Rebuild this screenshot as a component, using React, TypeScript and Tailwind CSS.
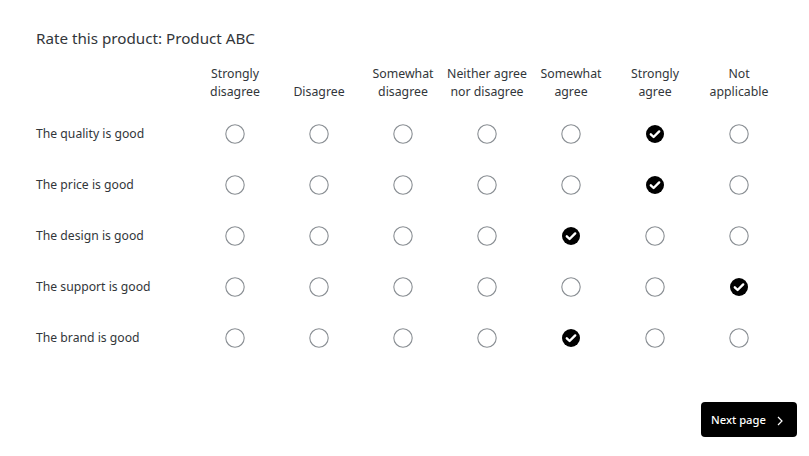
import React from "react";

const cols = [
  ["Strongly", "disagree"],
  ["Disagree"],
  ["Somewhat", "disagree"],
  ["Neither agree", "nor disagree"],
  ["Somewhat", "agree"],
  ["Strongly", "agree"],
  ["Not", "applicable"],
];

const rows: [string, number][] = [
  ["The quality is good", 5],
  ["The price is good", 5],
  ["The design is good", 4],
  ["The support is good", 6],
  ["The brand is good", 4],
];

function Radio({ checked }: { checked: boolean }) {
  if (checked)
    return (
      <svg width="20" height="20" viewBox="0 0 20 20">
        <circle cx="10" cy="10" r="9" fill="#000" />
        <path d="M5.8 10.3 L8.6 13 L14.2 7.4" stroke="#fff" strokeWidth="2.4" fill="none" strokeLinecap="round" strokeLinejoin="round" />
      </svg>
    );
  return (
    <svg width="20" height="20" viewBox="0 0 20 20">
      <circle cx="10" cy="10" r="9.2" fill="#fff" stroke="#8a8f94" strokeWidth="1.1" />
    </svg>
  );
}

export default function App() {
  return (
    <div
      className="w-[809px] h-[456px] bg-white text-[#32363a] relative"
      style={{ fontFamily: '"Noto Sans", "Open Sans", sans-serif' }}
    >
      <div className="pl-[36px] pt-[27px]">
        <div className="text-[15.2px] leading-[22px]">Rate this product: Product ABC</div>
        <div className="grid grid-cols-[157px_repeat(7,84px)] mt-[16px]">
          <div />
          {cols.map((c, i) => (
            <div key={i} className="flex flex-col items-center justify-end text-[12.3px] leading-[18px] h-[36px]">
              {c.map((l, j) => (
                <span key={j} className="whitespace-nowrap">{l}</span>
              ))}
            </div>
          ))}
        </div>
        <div className="mt-[7px]">
          {rows.map(([label, sel], r) => (
            <div key={r} className="grid grid-cols-[157px_repeat(7,84px)] h-[51px] items-center">
              <div className="text-[12.2px] pt-[2px]">{label}</div>
              {cols.map((_, i) => (
                <div key={i} className="flex justify-center">
                  <Radio checked={i === sel} />
                </div>
              ))}
            </div>
          ))}
        </div>
      </div>
      <div className="absolute left-[701px] top-[402px]">
        <button className="w-[96px] h-[35px] bg-black text-white rounded-[4px] flex items-center pl-[10px] pt-[2px] text-[11.2px] font-medium">
          <span>Next page</span>
          <svg className="ml-[10px]" width="8" height="10" viewBox="0 0 8 10">
            <path d="M2 1 L6 5 L2 9" stroke="#fff" strokeWidth="1.2" fill="none" />
          </svg>
        </button>
      </div>
    </div>
  );
}
